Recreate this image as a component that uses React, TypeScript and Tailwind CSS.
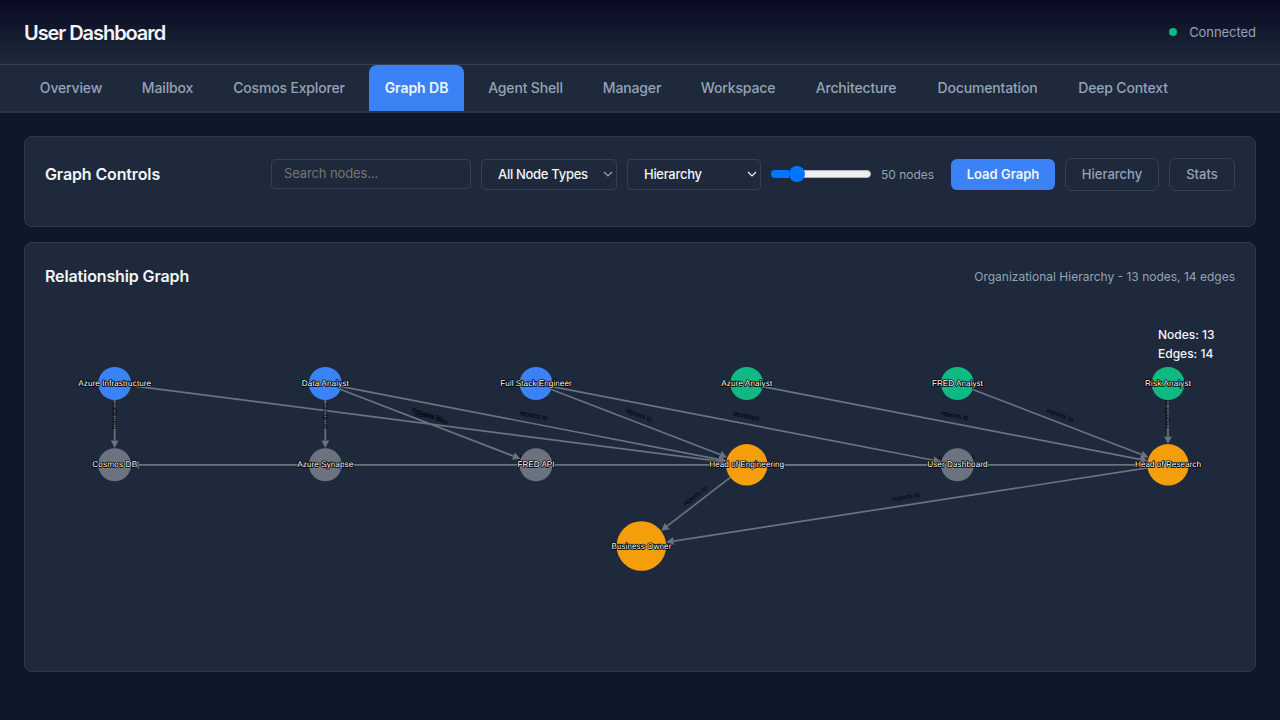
import React from "react";

type Node = { id: string; label: string; x: number; y: number; r: number; fill: string; w: number };
type Edge = { from: string; to: string; label: string };

const BLUE = "#3b82f6";
const GREEN = "#10b981";
const AMBER = "#f59e0b";
const GRAY = "#6b7280";

const nodes: Node[] = [
  { id: "infra", label: "Azure Infrastructure", x: 114.7, y: 383.5, r: 16.5, fill: BLUE, w: 73 },
  { id: "data", label: "Data Analyst", x: 325.3, y: 383.5, r: 16.5, fill: BLUE, w: 47 },
  { id: "full", label: "Full Stack Engineer", x: 536, y: 383.5, r: 16.5, fill: BLUE, w: 71.5 },
  { id: "azan", label: "Azure Analyst", x: 746.7, y: 383.5, r: 16.5, fill: GREEN, w: 51 },
  { id: "fran", label: "FRED Analyst", x: 957.4, y: 383.5, r: 16.5, fill: GREEN, w: 51 },
  { id: "risk", label: "Risk Analyst", x: 1168, y: 383.5, r: 16.5, fill: GREEN, w: 46 },
  { id: "cosmos", label: "Cosmos DB", x: 114.7, y: 464.8, r: 16.5, fill: GRAY, w: 45 },
  { id: "syn", label: "Azure Synapse", x: 325.3, y: 464.8, r: 16.5, fill: GRAY, w: 56 },
  { id: "fred", label: "FRED API", x: 536, y: 464.8, r: 16.5, fill: GRAY, w: 37 },
  { id: "eng", label: "Head of Engineering", x: 746.7, y: 464.8, r: 20.7, fill: AMBER, w: 75 },
  { id: "user", label: "User Dashboard", x: 957.4, y: 464.8, r: 16.5, fill: GRAY, w: 60.5 },
  { id: "res", label: "Head of Research", x: 1168, y: 464.8, r: 20.7, fill: AMBER, w: 66 },
  { id: "owner", label: "Business Owner", x: 641.4, y: 546, r: 24.8, fill: AMBER, w: 60 },
];

const edges: Edge[] = [
  { from: "infra", to: "cosmos", label: "manages" },
  { from: "infra", to: "eng", label: "reports to" },
  { from: "data", to: "syn", label: "analyzes" },
  { from: "data", to: "fred", label: "extracts data" },
  { from: "data", to: "eng", label: "reports to" },
  { from: "full", to: "eng", label: "reports to" },
  { from: "full", to: "user", label: "develops" },
  { from: "azan", to: "res", label: "reports to" },
  { from: "fran", to: "res", label: "reports to" },
  { from: "risk", to: "res", label: "reports to" },
  { from: "eng", to: "owner", label: "reports to" },
  { from: "res", to: "owner", label: "reports to" },
  { from: "eng", to: "res", label: "collaborates" },
  { from: "user", to: "cosmos", label: "reads data" },
];

const byId = (id: string) => nodes.find((n) => n.id === id)!;

function geometry(edge: Edge) {
  const a = byId(edge.from);
  const b = byId(edge.to);
  const dx = b.x - a.x;
  const dy = b.y - a.y;
  const len = Math.hypot(dx, dy);
  return { a, b, dx, dy, ux: dx / len, uy: dy / len };
}

function EdgeShape({ edge }: { edge: Edge }) {
  const { a, b, ux, uy } = geometry(edge);
  const tx = b.x - ux * (b.r + 0.3);
  const ty = b.y - uy * (b.r + 0.3);
  const bx = tx - ux * 7.4;
  const by = ty - uy * 7.4;
  return (
    <g fill={GRAY}>
      <line x1={a.x + ux * a.r} y1={a.y + uy * a.r} x2={bx} y2={by} stroke={GRAY} strokeWidth={1.7} />
      <polygon points={`${tx},${ty} ${bx - uy * 3.9},${by + ux * 3.9} ${bx + uy * 3.9},${by - ux * 3.9}`} />
    </g>
  );
}

function EdgeLabel({ edge }: { edge: Edge }) {
  const { a, b, dx, dy, ux, uy } = geometry(edge);
  const vertical = dx === 0;
  const mx = (a.x + ux * a.r + b.x - ux * b.r) / 2 - (vertical ? 1 : 0.5);
  const my = (a.y + uy * a.r + b.y - uy * b.r) / 2 - 8.3;
  const angle = vertical ? -90 : (Math.atan(dy / dx) * 180) / Math.PI;
  return (
    <text
      transform={`translate(${mx} ${my}) rotate(${angle})`}
      y={2.2}
      textAnchor="middle"
      fontSize={6.7}
      fill="#000"
      textRendering="geometricPrecision"
    >
      {edge.label}
    </text>
  );
}

function Graph() {
  return (
    <svg
      className="block h-[360px] w-full font-['Liberation_Sans',Arial,sans-serif]"
      viewBox="45 302 1190 360"
    >
      {edges.map((e) => (
        <EdgeShape key={e.from + e.to} edge={e} />
      ))}
      {edges.map((e) => (
        <EdgeLabel key={e.from + e.to} edge={e} />
      ))}
      {nodes.map((n) => (
        <circle key={n.id} cx={n.x} cy={n.y} r={n.r} fill={n.fill} />
      ))}
      {nodes.map((n) => (
        <g key={n.id} fontSize={8.27} textAnchor="middle" textRendering="geometricPrecision">
          <text
            x={n.x}
            y={n.y + 2.5}
            textLength={n.w}
            fill="#fff"
            stroke="#000"
            strokeWidth={1.65}
            strokeLinejoin="round"
            paintOrder="stroke"
          >
            {n.label}
          </text>
        </g>
      ))}
    </svg>
  );
}

function Chevron({ className }: { className: string }) {
  return (
    <svg className={className} width="10" height="6" viewBox="0 0 10 6" fill="none">
      <path d="M1 1l4 4 4-4" stroke="currentColor" strokeWidth="1.2" />
    </svg>
  );
}

const tabs = [
  { label: "Overview", cls: "w-[94px]" },
  { label: "Mailbox", cls: "w-[83px]" },
  { label: "Cosmos Explorer", cls: "w-[144px]" },
  { label: "Graph DB", cls: "w-[95px]" },
  { label: "Agent Shell", cls: "w-[107px]" },
  { label: "Manager", cls: "w-[90px]" },
  { label: "Workspace", cls: "w-[106px]" },
  { label: "Architecture", cls: "w-[114px]" },
  { label: "Documentation", cls: "w-[133px]" },
  { label: "Deep Context", cls: "w-[122px]" },
];

export default function App() {
  return (
    <div className="h-[720px] w-[1280px] overflow-hidden bg-[#0f172a] font-['Inter',sans-serif] text-[#f1f5f9]">
      <header className="flex h-[65px] items-center justify-between border-b border-[#334155] bg-linear-to-b from-[#0a0a23] to-[#1e293b] px-6">
        <h1 className="pt-[2px] text-[20px] font-semibold tracking-[-1.06px]">User Dashboard</h1>
        <div className="flex items-center gap-3 text-[13px] text-[#94a3b8]">
          <span className="size-2 rounded-full bg-[#10b981]" />
          <span className="pt-[2px] tracking-[-0.05px]">Connected</span>
        </div>
      </header>
      <nav className="flex h-12 gap-2 border-b-2 border-[#293548] bg-[#1e293b] px-6">
        {tabs.map((t) => (
          <button
            key={t.label}
            className={`${t.cls} flex h-[46px] shrink-0 items-center justify-center rounded-t-lg pb-[2px] text-[14px] whitespace-nowrap ${
              t.label === "Graph DB"
                ? "bg-[#3b82f6] font-semibold tracking-[-0.05px] text-[#f1f5f9]"
                : "font-medium tracking-[-0.16px] text-[#94a3b8]"
            }`}
          >
            {t.label}
          </button>
        ))}
      </nav>
      <main className="flex flex-col gap-[15px] px-6 pt-[23px]">
        <section className="h-[91px] rounded-lg border border-[#2e3b4f] bg-[#1e293b] px-5 pt-5">
          <div className="flex h-[34px] items-center">
            <h2 className="text-[16px] font-semibold tracking-[-0.13px]">Graph Controls</h2>
            <div className="ml-auto flex items-center gap-[10px] text-[13px]">
              <input
                placeholder="Search nodes..."
                className="h-[30px] w-[200px] rounded border border-[#334155] bg-[#1e293b] px-3 pb-[2px] tracking-[-0.12px] placeholder:text-[#757575]"
              />
              <div className="flex h-[31px] w-[136px] items-center justify-between rounded border border-[#334155] pr-[3px] pl-4 font-medium tracking-[-0.3px]">
                <span className="pt-px">All Node Types</span>
                <Chevron className="text-[#94a3b8]" />
              </div>
              <div className="flex h-[31px] w-[134px] items-center justify-between rounded border border-[#334155] pr-[3px] pl-4 font-medium tracking-[-0.3px]">
                <span className="pt-px">Hierarchy</span>
                <Chevron className="text-[#f1f5f9]" />
              </div>
              <div className="flex h-4 w-[100px] items-center">
                <span className="h-2 w-[18px] rounded-l-full bg-[#0075ff]" />
                <span className="z-10 -mr-2 size-4 shrink-0 rounded-full bg-[#0075ff]" />
                <span className="h-2 flex-1 rounded-r-full border border-[#b2b2b2] bg-[#efefef]" />
              </div>
              <span className="w-[60px] pt-px text-[12px] whitespace-nowrap text-[#94a3b8]">50 nodes</span>
              <button className="h-[31px] w-[104px] rounded-md bg-[#3b82f6] pt-px font-semibold">Load Graph</button>
              <button className="h-[33px] w-[94px] rounded-md border border-[#334155] pt-px font-medium text-[#94a3b8]">
                Hierarchy
              </button>
              <button className="h-[33px] w-[66px] rounded-md border border-[#334155] pt-px font-medium text-[#94a3b8]">
                Stats
              </button>
            </div>
          </div>
        </section>
        <section className="h-[430px] rounded-lg border border-[#2e3b4f] bg-[#1e293b] px-5 pt-5">
          <div className="flex h-[26px] items-center justify-between">
            <h2 className="text-[16px] font-semibold tracking-[-0.13px]">Relationship Graph</h2>
            <span className="pt-[2px] text-[12px] text-[#94a3b8]">Organizational Hierarchy - 13 nodes, 14 edges</span>
          </div>
          <div className="relative mt-[13px]">
            <Graph />
            <div className="absolute top-[23px] right-5 w-[57px] text-[12px] leading-[19px] font-medium">
              <div>Nodes: 13</div>
              <div>Edges: 14</div>
            </div>
          </div>
        </section>
      </main>
    </div>
  );
}
